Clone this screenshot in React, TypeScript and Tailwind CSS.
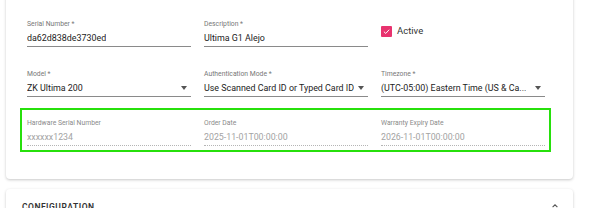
import React from 'react';

function Field({ label, value, select }: { label: string; value: string; select?: boolean }) {
  return (
    <div className="flex min-w-0 flex-col">
      <div className="h-[10px] text-[6.8px] leading-[10px] text-[#777]">{label}</div>
      <div className="mt-[1px] flex h-[17px] items-center justify-between border-b border-[#8a8a8a] text-[8.9px] leading-[17px] text-[#222]">
        <span className="overflow-hidden whitespace-nowrap">{value}</span>
        {select && (
          <span className="ml-[3px] mr-[4px] h-0 w-0 shrink-0 border-x-[3.5px] border-t-[4px] border-x-transparent border-t-[#555]" />
        )}
      </div>
    </div>
  );
}

function ReadOnlyField({ label, value }: { label: string; value: string }) {
  return (
    <div className="flex min-w-0 flex-col">
      <div className="h-[10px] text-[6.8px] leading-[10px] text-[#8a8a8a]">{label}</div>
      <div className="mt-[1px] h-[17px] border-b border-dotted border-[#b5b5b5] text-[8.8px] leading-[17px] text-[#a3a3a3]">
        {value}
      </div>
    </div>
  );
}

export default function App() {
  return (
    <div className="h-[208px] w-[589px] overflow-hidden bg-white font-['Roboto',sans-serif]">
      <div className="ml-[6px] -mt-[6px] w-[567px] rounded-[4px] bg-white pb-[27px] pt-[25px] shadow-[0_1px_3px_rgba(0,0,0,0.22)]">
        <div className="px-[21px]">
          <div className="grid w-[518px] grid-cols-[repeat(3,minmax(0,1fr))] gap-x-[13px]">
            <Field label="Serial Number *" value="da62d838de3730ed" />
            <Field label="Description *" value="Ultima G1 Alejo" />
            <div className="flex items-center pb-[4px]">
              <span className="flex h-[11px] w-[11px] items-center justify-center rounded-[1px] bg-[#e8336f]">
                <svg viewBox="0 0 12 12" className="h-[9px] w-[9px]">
                  <path d="M2.5 6.2 L5 8.6 L9.6 3.6" fill="none" stroke="white" strokeWidth="1.3" />
                </svg>
              </span>
              <span className="ml-[5px] text-[9.5px] text-[#333]">Active</span>
            </div>
          </div>
          <div className="mt-[22px] grid w-[518px] grid-cols-[repeat(3,minmax(0,1fr))] gap-x-[13px]">
            <Field label="Model *" value="ZK Ultima 200" select />
            <Field label="Authentication Mode *" value="Use Scanned Card ID or Typed Card ID" select />
            <Field label="Timezone *" value="(UTC-05:00) Eastern Time (US & Ca..." select />
          </div>
        </div>
        <div className="ml-[14px] mt-[11px] w-[531px] border-2 border-[#27e00c] px-[5px] pb-[4px] pt-[8px]">
          <div className="grid w-[518px] grid-cols-[repeat(3,minmax(0,1fr))] gap-x-[13px]">
            <ReadOnlyField label="Hardware Serial Number" value="xxxxxx1234" />
            <ReadOnlyField label="Order Date" value="2025-11-01T00:00:00" />
            <ReadOnlyField label="Warranty Expiry Date" value="2026-11-01T00:00:00" />
          </div>
        </div>
      </div>
      <div className="ml-[6px] mt-[10px] flex h-[40px] w-[567px] items-start justify-between rounded-[4px] bg-white px-[16px] pt-[12px] shadow-[0_1px_3px_rgba(0,0,0,0.22)]">
        <span className="text-[8.5px] font-semibold tracking-[0.5px] text-[#333]">CONFIGURATION</span>
        <svg viewBox="0 0 10 10" className="mr-[-2px] mt-[1px] h-[8px] w-[8px]">
          <path d="M2 6.5 L5 3.5 L8 6.5" fill="none" stroke="#555" strokeWidth="1.4" />
        </svg>
      </div>
    </div>
  );
}
